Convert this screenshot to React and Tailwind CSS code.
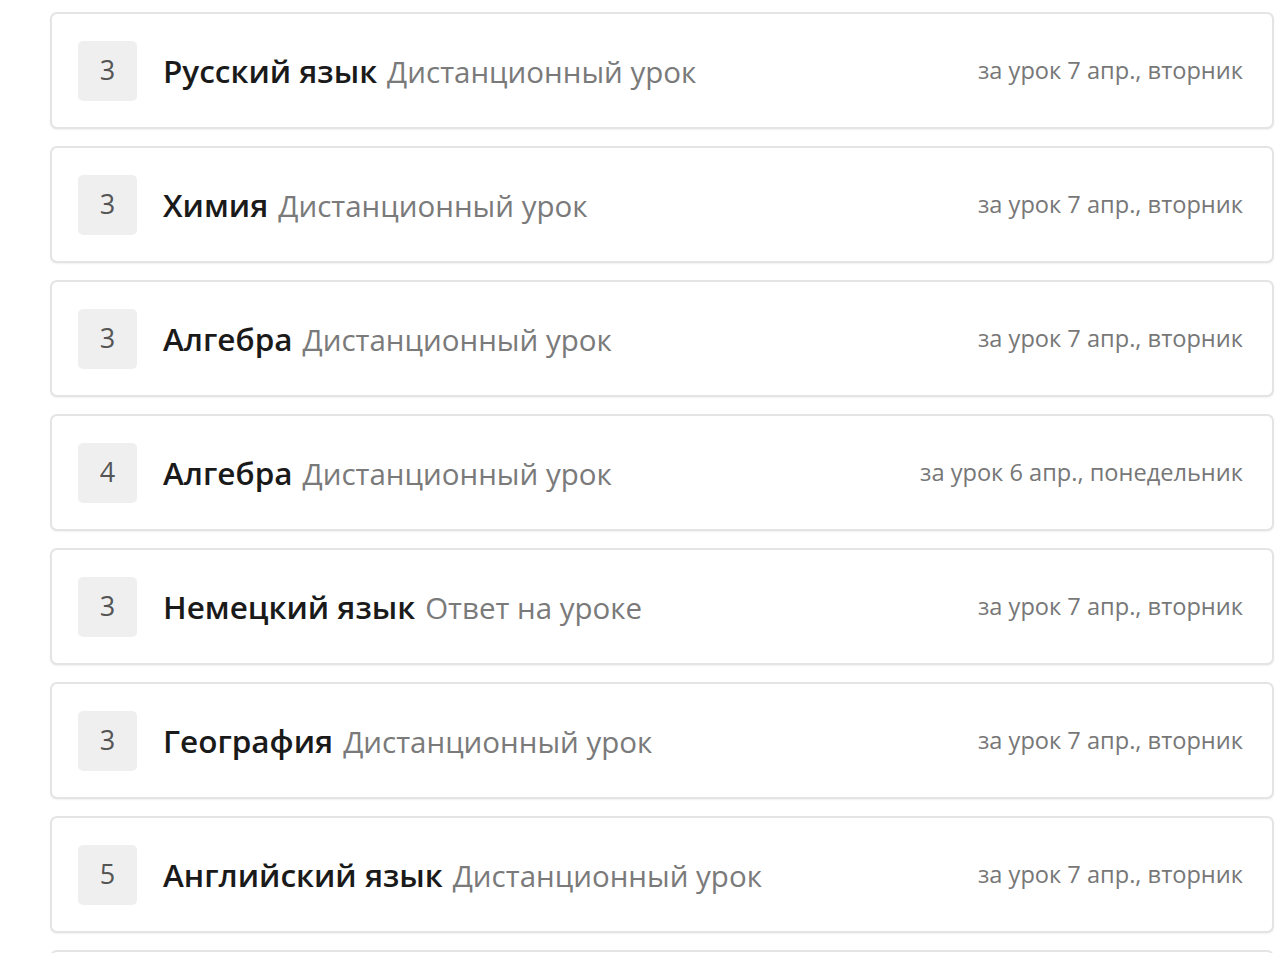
import React from 'react';

const marks = [
  { grade: 3, subject: 'Русский язык', kind: 'Дистанционный урок', date: 'за урок 7 апр., вторник' },
  { grade: 3, subject: 'Химия', kind: 'Дистанционный урок', date: 'за урок 7 апр., вторник' },
  { grade: 3, subject: 'Алгебра', kind: 'Дистанционный урок', date: 'за урок 7 апр., вторник' },
  { grade: 4, subject: 'Алгебра', kind: 'Дистанционный урок', date: 'за урок 6 апр., понедельник' },
  { grade: 3, subject: 'Немецкий язык', kind: 'Ответ на уроке', date: 'за урок 7 апр., вторник' },
  { grade: 3, subject: 'География', kind: 'Дистанционный урок', date: 'за урок 7 апр., вторник' },
  { grade: 5, subject: 'Английский язык', kind: 'Дистанционный урок', date: 'за урок 7 апр., вторник' },
];

const cardClass =
  'flex h-[117px] items-center rounded-[7px] border-2 border-[#e4e4e4] bg-white pl-[26px] pr-[29px] shadow-[0_1px_2px_rgba(0,0,0,0.06)]';

const MarkCard = ({ mark }) => (
  <div className={cardClass}>
    <div className="flex h-[60px] w-[59px] shrink-0 items-center justify-center rounded-[5px] bg-[#efefef] text-[27px] font-medium text-[#555]">
      {mark.grade}
    </div>
    <div className="ml-[26px] flex-1 whitespace-nowrap">
      <span className="text-[31.5px] font-semibold text-[#1a1a1a]">{mark.subject}</span>
      <span className="ml-[10px] text-[29.5px] text-[#7a7a7a]">{mark.kind}</span>
    </div>
    <div className="whitespace-nowrap text-[23.6px] text-[#777]">{mark.date}</div>
  </div>
);

export default function App() {
  return (
    <div className="min-h-screen bg-white pl-[50px] pr-[6px] pt-[12px] font-['Open_Sans',sans-serif]">
      <div className="flex flex-col gap-[17px]">
        {marks.map((m, i) => (
          <MarkCard key={i} mark={m} />
        ))}
        {/* next card, only its top edge is in view */}
        <div className={cardClass} />
      </div>
    </div>
  );
}
